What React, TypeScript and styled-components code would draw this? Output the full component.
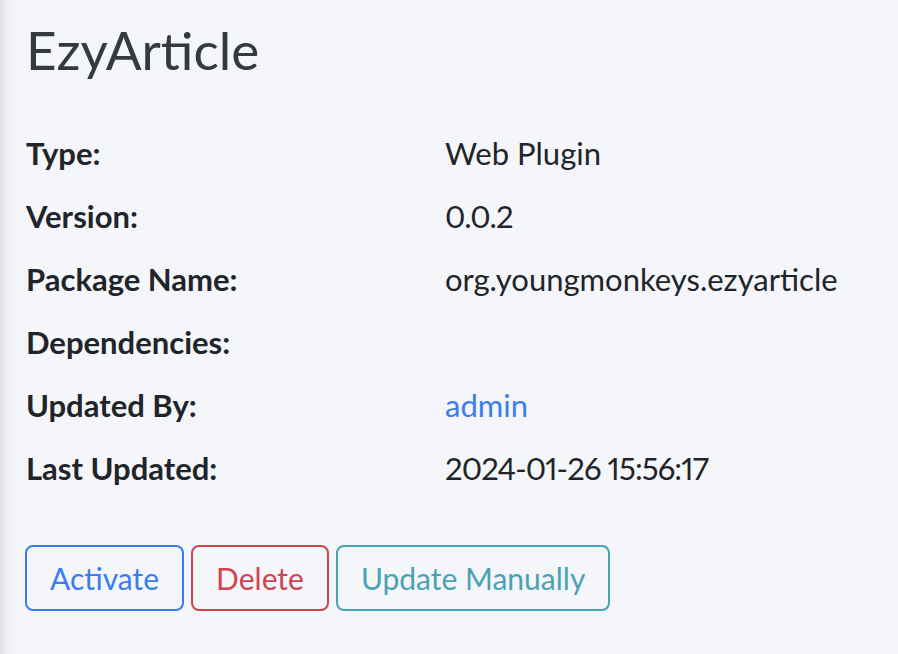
import React from "react";
import styled, { createGlobalStyle } from "styled-components";

const GlobalStyle = createGlobalStyle`
  html, body {
    margin: 0;
    padding: 0;
    background: #f4f6f9;
  }
  body {
    font-family: "Lato", "Noto Sans", sans-serif;
    color: #212529;
  }
`;

const Page = styled.div`
  min-height: 654px;
  box-sizing: border-box;
  padding: 15px 0 0 26px;
  background: linear-gradient(to right, #dfe1e4 0px, #eef0f3 7px, #f4f6f9 16px);
`;

const Title = styled.h1`
  margin: 0 0 37px 0;
  font-size: 53px;
  font-weight: 400;
  line-height: 70px;
  color: #343a40;
`;

const DetailGrid = styled.dl`
  display: grid;
  grid-template-columns: 419px 1fr;
  grid-auto-rows: 63px;
  margin: 0;
  font-size: 31px;
  line-height: 63px;
  font-variant-numeric: proportional-nums;
`;

const Label = styled.dt`
  font-weight: 700;
  margin: 0;
`;

const Value = styled.dd<{ $numeric?: boolean }>`
  margin: 0;
  letter-spacing: ${(p) => (p.$numeric ? "-0.9px" : "normal")};
`;

const UserLink = styled.a`
  color: #3a7df3;
  text-decoration: none;
`;

const ButtonRow = styled.div`
  display: flex;
  gap: 7px;
  margin-top: 45px;
  margin-left: -1px;
`;

const palette = {
  primary: "#3a7df3",
  danger: "#d2434f",
  info: "#4aa2b7",
};

const OutlineButton = styled.button<{ $variant: keyof typeof palette }>`
  height: 66px;
  box-sizing: border-box;
  padding: 0 23px;
  border: 2px solid ${(p) => palette[p.$variant]};
  border-radius: 8px;
  background: transparent;
  color: ${(p) => palette[p.$variant]};
  font-family: inherit;
  font-size: 30px;
  font-weight: 400;
  cursor: pointer;
`;

const rows: { label: string; value: React.ReactNode; numeric?: boolean }[] = [
  { label: "Type:", value: "Web Plugin" },
  { label: "Version:", value: "0.0.2", numeric: true },
  { label: "Package Name:", value: "org.youngmonkeys.ezyarticle" },
  { label: "Dependencies:", value: "" },
  { label: "Updated By:", value: <UserLink href="#">admin</UserLink> },
  { label: "Last Updated:", value: "2024-01-26 15:56:17", numeric: true },
];

export default function App() {
  return (
    <>
      <GlobalStyle />
      <Page>
        <Title>EzyArticle</Title>
        <DetailGrid>
          {rows.map((r) => (
            <React.Fragment key={r.label}>
              <Label>{r.label}</Label>
              <Value $numeric={r.numeric}>{r.value}</Value>
            </React.Fragment>
          ))}
        </DetailGrid>
        <ButtonRow>
          <OutlineButton $variant="primary">Activate</OutlineButton>
          <OutlineButton $variant="danger">Delete</OutlineButton>
          <OutlineButton $variant="info">Update Manually</OutlineButton>
        </ButtonRow>
      </Page>
    </>
  );
}
